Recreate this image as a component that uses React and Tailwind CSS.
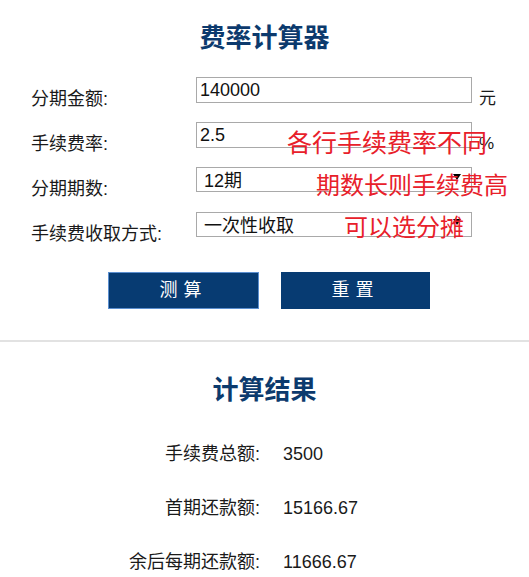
import { useState } from 'react';

const font = { fontFamily: '"Liberation Sans", "Noto Sans CJK SC", sans-serif' };

function Row({ label, children, unit }) {
  return (
    <div className="flex items-start h-[26px]">
      <div className="w-[165px] pt-[9px] text-[18px] leading-[26px] text-[#1a1a1a]">{label}</div>
      {children}
      {unit && <div className="ml-[7px] pt-[9px] text-[17px] leading-[26px] text-[#1a1a1a]">{unit}</div>}
    </div>
  );
}

function SelectBox({ value }) {
  return (
    <div className="relative w-[276px] h-[25px] border border-[#a9a9a9] bg-white pl-[7px] text-[18px] leading-[26px] text-[#111]">
      {value}
      <span className="absolute right-[10px] top-[6px] w-0 h-0 border-l-[4px] border-r-[4px] border-t-[6px] border-l-transparent border-r-transparent border-t-black"></span>
    </div>
  );
}

export default function App() {
  const [amount, setAmount] = useState('140000');
  const [rate, setRate] = useState('2.5');

  const results = [
    ['手续费总额:', '3500'],
    ['首期还款额:', '15166.67'],
    ['余后每期还款额:', '11666.67'],
  ];

  return (
    <div className="relative w-[529px] h-[577px] overflow-hidden bg-white" style={font}>
      <h1 className="pt-[20px] text-center text-[26px] leading-[36px] font-bold text-[#0c3a6d]">费率计算器</h1>

      <div className="mt-[21px] pl-[31px] flex flex-col gap-[19px]">
        <Row label="分期金额:" unit="元">
          <input
            value={amount}
            onChange={(e) => setAmount(e.target.value)}
            className="w-[276px] h-[26px] border border-[#a9a9a9] px-[3px] text-[18px] text-[#111] outline-none"
          />
        </Row>
        <Row label="手续费率:" unit="%">
          <input
            value={rate}
            onChange={(e) => setRate(e.target.value)}
            className="w-[276px] h-[26px] border border-[#a9a9a9] px-[3px] text-[18px] text-[#111] outline-none"
          />
        </Row>
        <Row label="分期期数:">
          <SelectBox value="12期" />
        </Row>
        <Row label="手续费收取方式:">
          <SelectBox value="一次性收取" />
        </Row>
      </div>

      <div className="mt-[34px] flex justify-center gap-[22px] pl-[9px]">
        <button className="w-[151px] h-[37px] bg-[#073b72] border border-[#5b8fd0] text-white text-[18px] tracking-[6px]">测算</button>
        <button className="w-[149px] h-[37px] bg-[#073b72] text-white text-[18px] tracking-[6px]">重置</button>
      </div>

      <div className="mt-[31px] h-[2px] bg-[#e2e2e2]"></div>

      <h2 className="mt-[30px] text-center text-[26px] leading-[36px] font-bold text-[#0c3a6d]">计算结果</h2>

      <div className="mt-[28px] flex flex-col gap-[18px]">
        {results.map(([k, v]) => (
          <div key={k} className="flex items-center h-[36px] text-[18px] text-[#1a1a1a]">
            <div className="w-[260px] text-right">{k}</div>
            <div className="ml-[23px] text-[18px]">{v}</div>
          </div>
        ))}
      </div>

      <div className="absolute left-[287px] top-[131px] text-[25px] leading-none text-[#e8202a]">各行手续费率不同</div>
      <div className="absolute left-[316px] top-[174px] text-[24px] leading-none text-[#e8202a]">期数长则手续费高</div>
      <div className="absolute left-[344px] top-[216px] text-[24px] leading-none text-[#e8202a]">可以选分摊</div>
    </div>
  );
}
